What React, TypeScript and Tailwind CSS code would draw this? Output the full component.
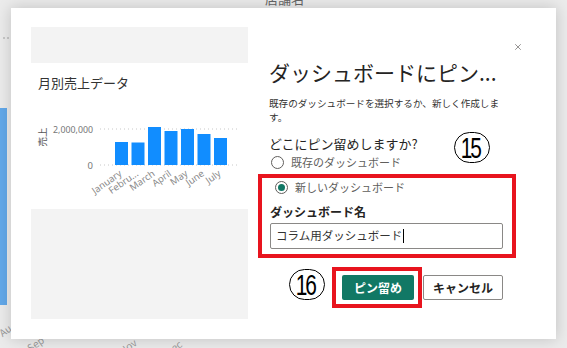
import { X } from "lucide-react";

const bars = [
  { x: 84, top: 24 },
  { x: 100.5, top: 24.5 },
  { x: 117, top: 9 },
  { x: 133.5, top: 13 },
  { x: 150, top: 11 },
  { x: 166.5, top: 16 },
  { x: 183, top: 20 },
];

const months = ["January", "Febru...", "March", "April", "May", "June", "July"];

function SalesChart() {
  return (
    <svg width={217} height={90} viewBox="0 0 217 90" className="block">
      <text
        x={11}
        y={19}
        transform="rotate(-90 11 19)"
        textAnchor="middle"
        dominantBaseline="central"
        fontSize={9.5}
        fill="#555"
        fontFamily="Noto Sans CJK JP, sans-serif"
      >
        売上
      </text>
      <text
        x={62}
        y={15}
        textAnchor="end"
        fontSize={9.5}
        fill="#777"
        textLength={40}
        lengthAdjust="spacingAndGlyphs"
        fontFamily="Noto Sans, sans-serif"
      >
        2,000,000
      </text>
      <text x={62} y={51} textAnchor="end" fontSize={9.5} fill="#777" fontFamily="Noto Sans, sans-serif">
        0
      </text>
      <line x1={69} x2={209} y1={11} y2={11} stroke="#c8c8c8" strokeDasharray="1 3" />
      <line x1={69} x2={209} y1={47} y2={47} stroke="#c8c8c8" strokeDasharray="1 3" />
      {bars.map((b) => (
        <rect key={b.x} x={b.x} y={b.top} width={13} height={47 - b.top} fill="#118dff" />
      ))}
      {months.map((m, i) => {
        const cx = bars[i].x + 7.5;
        return (
          <text
            key={m}
            x={cx}
            y={57}
            transform={`rotate(-35 ${cx} 57)`}
            textAnchor="end"
            fontSize={9.5}
            fill="#8a8a8a"
            fontFamily="Noto Sans, sans-serif"
          >
            {m}
          </text>
        );
      })}
    </svg>
  );
}

function Radio({ checked, label }: { checked?: boolean; label: string }) {
  return (
    <div className="flex h-[18px] items-center">
      <span className="ml-[13px] flex h-[13px] w-[13px] items-center justify-center rounded-full border border-[#605e5c] bg-white">
        {checked && <span className="h-[7px] w-[7px] rounded-full bg-[#117865]" />}
      </span>
      <span className="ml-[7px] text-[11px] text-[#605e5c]">{label}</span>
    </div>
  );
}

// annotation marker: thin circle round a step number
function Step({ n, className }: { n: string; className?: string }) {
  return (
    <span
      className={`flex h-[31px] w-[36px] items-center justify-center rounded-full border-[1.5px] border-black font-['Liberation_Sans',sans-serif] text-[29px] leading-none tracking-[-3px] text-black ${className ?? ""}`}
    >
      <span className="-ml-[3px] mt-[1px] scale-x-[0.72]">{n}</span>
    </span>
  );
}

export default function App() {
  return (
    <div className="relative h-[348px] w-[567px] overflow-hidden bg-[#ebebeb] pl-[11px] pt-[8px] font-['Noto_Sans_CJK_JP',sans-serif]">
      {/* dimmed report behind the dialog */}
      <span className="absolute left-[265px] top-[-11px] text-[13px] text-[#666]">店舗名</span>
      <span className="absolute left-[3px] top-[37px] h-[2px] w-[2px] rounded-full bg-[#bbb]" />
      <span className="absolute left-[7px] top-[37px] h-[2px] w-[2px] rounded-full bg-[#bbb]" />
      <div className="absolute left-0 top-[108px] h-[197px] w-[7px] bg-[#62a8e9]" />
      <span className="absolute left-[0px] top-[326px] origin-left -rotate-[35deg] text-[10px] text-[#999]">Au</span>
      <span className="absolute left-[28px] top-[341px] origin-left -rotate-[35deg] text-[10px] text-[#999]">Sep</span>
      <span className="absolute left-[120px] top-[344px] origin-left -rotate-[35deg] text-[10px] text-[#999]">Nov</span>
      <span className="absolute left-[166px] top-[345px] origin-left -rotate-[35deg] text-[10px] text-[#999]">Dec</span>

      <div className="relative z-10 flex h-[331px] w-[545px] bg-white pl-[20px] pt-[19px] shadow-[0_0_14px_rgba(0,0,0,0.18)]">
        <button className="absolute left-[502px] top-[34px] flex h-[10px] w-[10px] items-center justify-center text-[#605e5c]">
          <X size={10} strokeWidth={1.6} />
        </button>

        {/* preview */}
        <div className="flex w-[217px] flex-col">
          <div className="h-[36px] bg-[#f3f3f3]" />
          <div className="mt-[11px] pl-[7px] text-[13px] leading-[18px] text-[#333]">月別売上データ</div>
          <div className="mt-[26px]">
            <SalesChart />
          </div>
          <div className="mt-[1px] h-[110px] bg-[#f3f3f3]" />
        </div>

        {/* form */}
        <div className="relative ml-[10px] flex w-[258px] flex-col">
          <h2 className="mt-[31px] pl-[11px] text-[21px] leading-[28px] text-[#252423]">ダッシュボードにピン...</h2>
          <p className="mt-[10px] pl-[11px] text-[9.6px] leading-[14px] text-[#323130]">
            既存のダッシュボードを選択するか、新しく作成しま
            <br />
            す。
          </p>
          <div className="mt-[11px] pl-[11px] text-[13px] leading-[18px] text-[#252423]">どこにピン留めしますか?</div>
          <Step n="15" className="absolute left-[196px] top-[105px]" />
          <Radio label="既存のダッシュボード" />

          <div className="mt-[3px] border-4 border-[#e8141e] pb-[5px] pl-[8px] pr-[9px]">
            <div className="-ml-[8px]">
              <Radio checked label="新しいダッシュボード" />
            </div>
            <div className="mt-[7px] text-[12px] font-bold leading-[18px] text-[#252423]">ダッシュボード名</div>
            <div className="mt-[2px] flex h-[26px] items-center rounded-[2px] border border-[#8a8886] px-[5px] text-[11.5px] text-[#333]">
              コラム用ダッシュボード
              <span className="ml-[1px] h-[14px] w-px bg-black" />
            </div>
          </div>

          <div className="mt-[9px] flex items-center justify-end pr-[13px]">
            <Step n="16" className="mr-[7px] -mt-[6px]" />
            <div className="border-4 border-[#e8141e] pb-[4px] pl-[6px] pr-[4px] pt-[4px]">
              <button className="flex h-[25px] w-[72px] items-center justify-center rounded-[2px] bg-[#117865] text-[12px] font-bold text-white">
                ピン留め
              </button>
            </div>
            <button className="ml-px flex h-[25px] w-[80px] items-center justify-center rounded-[2px] border border-[#8a8886] bg-white text-[12px] font-bold text-[#252423]">
              キャンセル
            </button>
          </div>
        </div>
      </div>
    </div>
  );
}
